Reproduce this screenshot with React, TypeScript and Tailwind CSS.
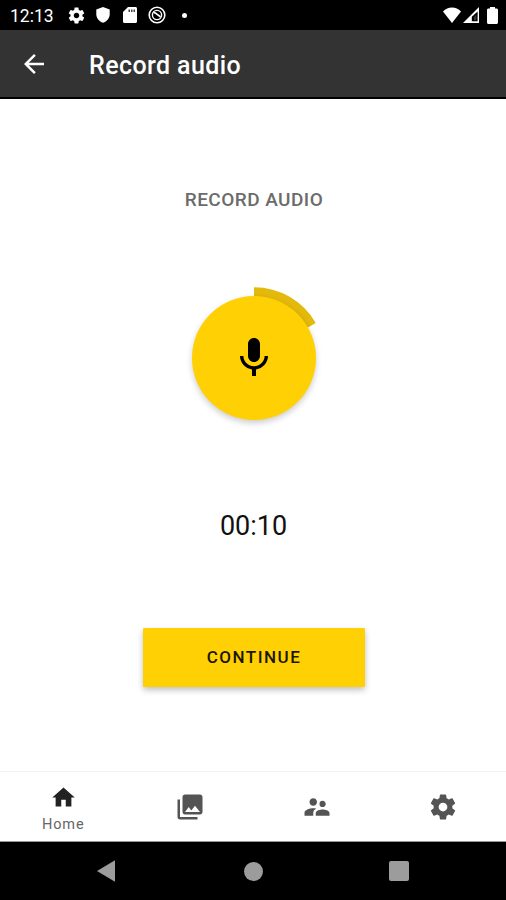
import React from 'react';
import { MdArrowBack, MdHome, MdPhotoLibrary, MdSupervisorAccount } from 'react-icons/md';

const GearIcon: React.FC<{ className?: string }> = ({ className }) => (
  <svg viewBox="0 0 24 24" fill="currentColor" className={className}>
    <path d="M19.43 12.98c.04-.32.07-.64.07-.98s-.03-.66-.07-.98l2.11-1.65c.19-.15.24-.42.12-.64l-2-3.46c-.12-.22-.39-.3-.61-.22l-2.49 1c-.52-.4-1.08-.73-1.69-.98l-.38-2.65C14.46 2.18 14.25 2 14 2h-4c-.25 0-.46.18-.49.42l-.38 2.65c-.61.25-1.17.59-1.69.98l-2.49-1c-.23-.09-.49 0-.61.22l-2 3.46c-.13.22-.07.49.12.64l2.11 1.65c-.04.32-.07.65-.07.98s.03.66.07.98l-2.11 1.65c-.19.15-.24.42-.12.64l2 3.46c.12.22.39.3.61.22l2.49-1c.52.4 1.08.73 1.69.98l.38 2.65c.03.24.24.42.49.42h4c.25 0 .46-.18.49-.42l.38-2.65c.61-.25 1.17-.59 1.69-.98l2.49 1c.23.09.49 0 .61-.22l2-3.46c.12-.22.07-.49-.12-.64l-2.11-1.65zM12 15.5c-1.93 0-3.5-1.57-3.5-3.5s1.57-3.5 3.5-3.5 3.5 1.57 3.5 3.5-1.57 3.5-3.5 3.5z" />
  </svg>
);

const StatusBar = () => (
  <div className="flex h-[30px] shrink-0 items-center bg-black pr-[8px] pl-[10px] text-white">
    <span className="w-[46px] pt-[3px] text-[17.5px] leading-none">12:13</span>
    <GearIcon className="ml-[10.5px] size-[19px]" />
    <svg viewBox="0 0 14 16" fill="currentColor" className="ml-[10.5px] h-4 w-[14px]">
      <path d="M7 0l6.7 2.6v4.7c0 3.9-2.8 7.1-6.7 8.5C3.1 14.4.3 11.2.3 7.3V2.6z" />
    </svg>
    <svg viewBox="0 0 14 16" className="ml-[13px] h-4 w-[14px]">
      <path d="M5 0h7.5c.8 0 1.5.7 1.5 1.5v13c0 .8-.7 1.5-1.5 1.5h-11C.7 16 0 15.3 0 14.5V5z" fill="white" />
      <path d="M5.5 2.5H7V5H5.5zM8 2.5h1.5V5H8zM10.5 2.5H12V5h-1.5z" fill="#444" />
    </svg>
    <svg viewBox="0 0 18 18" fill="none" stroke="currentColor" className="ml-[11px] size-[18px]">
      <circle cx="9" cy="9" r="7.8" strokeWidth="1.6" />
      <circle cx="9" cy="9" r="4.6" strokeWidth="1.4" />
      <path d="M5.5 6.8c1.5-.6 2.6.7 3.5 1.5s1.8 1 3.4 2.7" strokeWidth="1.7" />
    </svg>
    <span className="ml-[16px] size-[5px] rounded-full bg-white" />
    <svg viewBox="0 0 18 16" fill="currentColor" className="ml-auto h-4 w-[18px]">
      <path d="M9 16L0 4.6C2.5 1.8 5.5.4 9 .4s6.5 1.4 9 4.2z" />
    </svg>
    <svg viewBox="0 0 16 16" className="ml-[2px] h-4 w-4">
      <path d="M16 0v16H0z" fill="white" />
      <path d="M14.6 4.5v9.8H8.8V9.8z" fill="black" />
      <path d="M11 10l2.3-2.3v5.6H11z" fill="#888" opacity=".4" />
    </svg>
    <svg viewBox="0 0 11 17" fill="currentColor" className="ml-[8px] h-[17px] w-[11px]">
      <path d="M3 0h5v1.5h1.5c.8 0 1.5.6 1.5 1.4v12.6c0 .8-.7 1.5-1.5 1.5h-8C.7 17 0 16.3 0 15.5V2.9c0-.8.7-1.4 1.5-1.4H3z" />
    </svg>
  </div>
);

const AppBar = () => (
  <header className="flex h-[69px] shrink-0 items-center border-b-2 border-black bg-[#333] text-white">
    <MdArrowBack className="ml-[19px] size-[30px]" />
    <h1 className="ml-[40px] pt-[4px] text-[25px] leading-none font-medium tracking-[0.4px]">Record audio</h1>
  </header>
);

const RecordButton = () => (
  <button className="relative mt-[86px] size-[124px] rounded-full">
    {/* progress ring, 10s of 60s */}
    <svg viewBox="0 0 144 144" className="absolute -top-[10px] -left-[10px] size-[144px]" fill="none">
      <path d="M72 6A66.5 66.5 0 0 1 129.6 39.25" stroke="#e3b90b" strokeWidth="9.5" />
    </svg>
    <span className="relative flex size-[124px] items-center justify-center rounded-full bg-[#ffd003] shadow-[0_3px_6px_rgba(0,0,0,0.2)]">
      <svg viewBox="0 0 24 24" fill="black" className="size-12">
        <path d="M12 14c1.66 0 2.99-1.34 2.99-3L15 5c0-1.66-1.34-3-3-3S9 3.34 9 5v6c0 1.66 1.34 3 3 3zm5.3-3c0 3-2.54 5.1-5.3 5.1S6.7 14 6.7 11H5c0 3.41 2.72 6.23 6 6.72V21h2v-3.28c3.28-.48 6-3.3 6-6.72h-1.7z" />
      </svg>
    </span>
  </button>
);

const BottomNav = () => (
  <nav className="grid h-[71px] shrink-0 grid-cols-4 border-t border-b border-t-[#f2f2f2] border-b-[#999] bg-white text-[#545454]">
    <div className="flex flex-col items-center pt-[12px]">
      <MdHome className="size-[27px] text-[#222]" />
      <span className="mt-[7px] text-[14.5px] leading-none tracking-[0.9px] text-[#666]">Home</span>
    </div>
    <div className="flex items-center justify-center">
      <MdPhotoLibrary className="size-[30px]" />
    </div>
    <div className="flex items-center justify-center pl-[1px]">
      <MdSupervisorAccount className="size-[30px]" />
    </div>
    <div className="flex items-center justify-center">
      <GearIcon className="size-[30px]" />
    </div>
  </nav>
);

const SystemNav = () => (
  <div className="flex h-[58px] shrink-0 items-center bg-black text-[#9c9c9c]">
    <svg viewBox="0 0 18 22" fill="currentColor" className="ml-[97px] h-[22px] w-[18px]">
      <path d="M18 .3v21.4L0 11z" />
    </svg>
    <span className="ml-[129px] size-[19px] rounded-full bg-[#9c9c9c]" />
    <span className="ml-[126px] size-[20px] rounded-[2px] bg-[#9c9c9c]" />
  </div>
);

export default function App() {
  return (
    <div className="flex h-[900px] w-full flex-col overflow-hidden bg-white font-['Roboto',sans-serif]">
      <StatusBar />
      <AppBar />
      <main className="flex flex-1 flex-col items-center pl-[2px]">
        <h2 className="mt-[91px] text-[19px] leading-5 font-medium tracking-[0.45px] text-[#6b6b6b]">RECORD AUDIO</h2>
        <RecordButton />
        <div className="mt-[91px] pr-[1px] text-[27px] leading-[30px] text-[#111]">00:10</div>
        <button className="mt-[87px] h-[59px] w-[222px] rounded-[1px] bg-[#ffd003] text-[17px] font-medium tracking-[1.5px] text-[#1b1600] shadow-[0_3px_6px_rgba(0,0,0,0.25)]">
          CONTINUE
        </button>
      </main>
      <BottomNav />
      <SystemNav />
    </div>
  );
}
